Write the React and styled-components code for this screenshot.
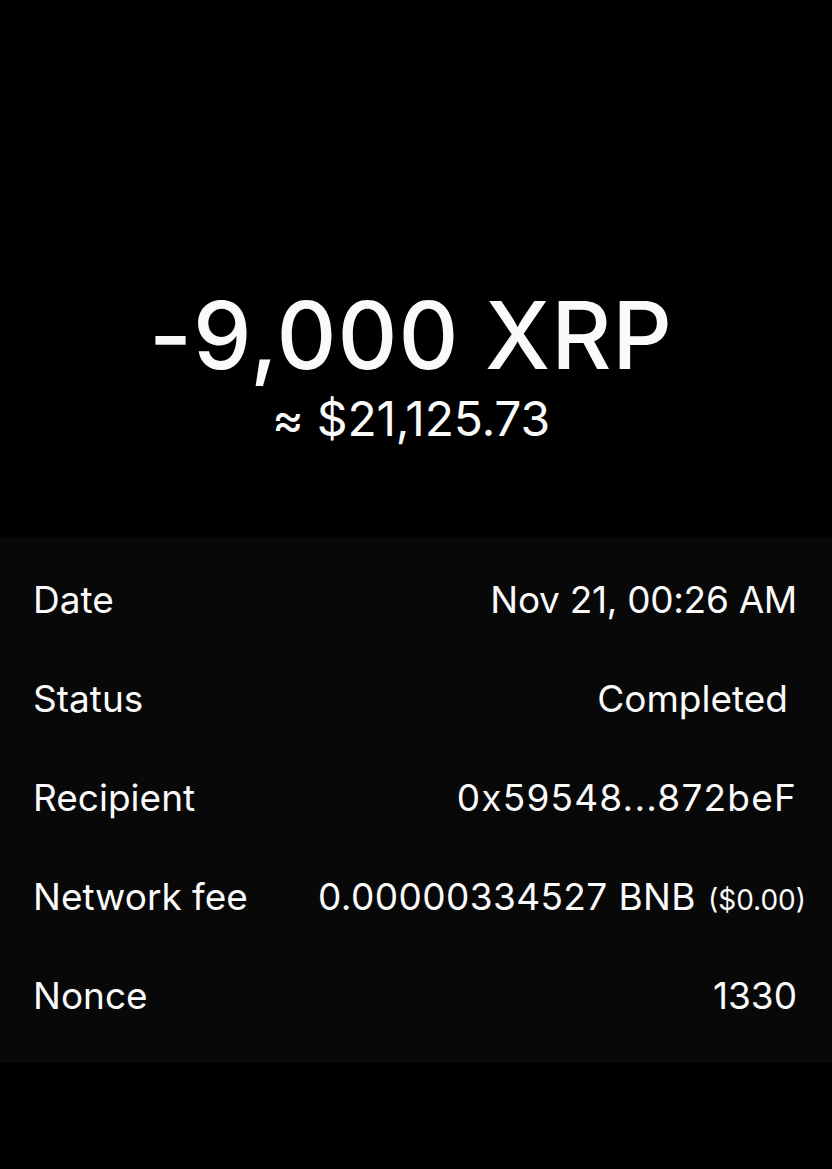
import React from 'react';
import styled, { createGlobalStyle } from 'styled-components';

const GlobalStyle = createGlobalStyle`
  html, body {
    margin: 0;
    padding: 0;
    background: #000;
  }
  body {
    font-family: Inter, "Noto Sans", "Liberation Sans", sans-serif;
    color: #fafafa;
    -webkit-font-smoothing: antialiased;
  }
`;

const rows = [
  { label: 'Date', value: 'Nov 21, 00:26 AM', spacing: -0.3 },
  { label: 'Status', value: 'Completed', inset: 9 },
  { label: 'Recipient', value: '0x59548...872beF', spacing: 1.2 },
  { label: 'Network fee', value: '0.00000334527 BNB', extra: '($0.00)', spacing: 0.4 },
  { label: 'Nonce', value: '1330' },
];

const App = () => {
  return (
    <Screen>
      <GlobalStyle />
      <Hero>
        <Amount>-9,000 XRP</Amount>
        <Fiat>≈ $21,125.73</Fiat>
      </Hero>
      <Details>
        {rows.map((row) => (
          <Row key={row.label}>
            <Label>{row.label}</Label>
            <Value $inset={row.inset} $spacing={row.spacing}>
              {row.value}
              {row.extra && <Extra>{row.extra}</Extra>}
            </Value>
          </Row>
        ))}
      </Details>
    </Screen>
  );
};

export default App;

const Screen = styled.div`
  width: 832px;
  height: 1169px;
  background: #000;
  display: flex;
  flex-direction: column;
  overflow: hidden;
`;

const Hero = styled.div`
  height: 538px;
  display: flex;
  flex-direction: column;
  align-items: center;
  padding: 289px 10px 0 0;
  box-sizing: border-box;
`;

const Amount = styled.div`
  font-size: 93px;
  line-height: 1;
  font-weight: 500;
  letter-spacing: 0.9px;
`;

const Fiat = styled.div`
  margin-top: 13px;
  font-size: 48px;
  line-height: 1;
  font-weight: 400;
  letter-spacing: -0.2px;
`;

const Details = styled.div`
  background: #080808;
  height: 525px;
  padding: 12px 35px 0 33px;
  box-sizing: border-box;
  display: flex;
  flex-direction: column;
`;

const Row = styled.div`
  height: 99px;
  display: flex;
  align-items: center;
  justify-content: space-between;
`;

const Label = styled.div`
  font-size: 37px;
  line-height: 1;
`;

const Value = styled.div`
  font-size: 37px;
  line-height: 1;
  white-space: nowrap;
  letter-spacing: ${(p) => p.$spacing || 0}px;
  margin-right: ${(p) => p.$inset || 0}px;
`;

const Extra = styled.span`
  font-size: 28px;
  letter-spacing: 0;
  margin-left: 12px;
  margin-right: -9px;
`;
